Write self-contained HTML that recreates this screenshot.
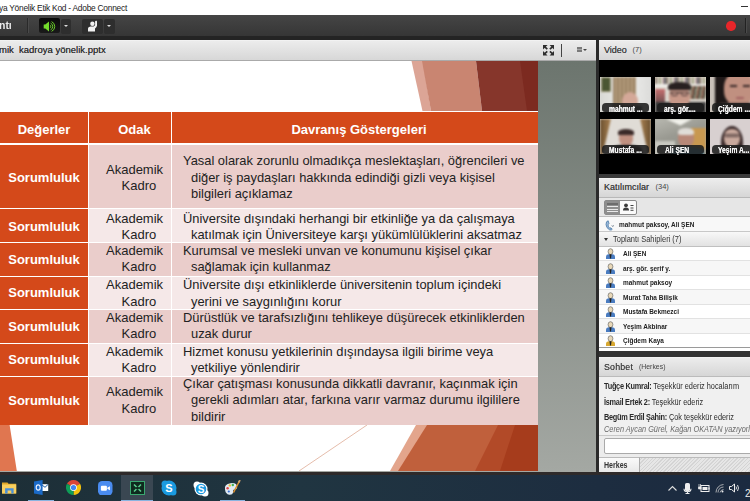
<!DOCTYPE html>
<html><head><meta charset="utf-8">
<style>
*{box-sizing:border-box;margin:0;padding:0}
html,body{width:750px;height:501px;overflow:hidden;background:#2b2b2b;font-family:"Liberation Sans",sans-serif;position:relative}
.a{position:absolute}
.c{display:flex;align-items:center;justify-content:center;text-align:center}
.hd{background:#d4491a;color:#fff;font-weight:bold;font-size:13px}
.ak{font-size:13px;color:#222;line-height:16.4px}
.ak>div{padding-top:0}
.dv{font-size:12.9px;color:#222;line-height:16.4px;padding-left:11px;display:flex;align-items:center}
.dv .ln{padding-left:8px}
.sh{position:relative;top:1.5px}
.podhdr{background:linear-gradient(#f8f8f8 0,#ececec 1px,#d6d6d6)}
.ph{font-size:9px;color:#3c3c3c;text-shadow:0 0 .15px #666}
.cnt{font-size:7.5px;color:#444}
.lbl{background:rgba(28,28,28,.88);border-radius:4px 4px 3px 3px}
.lbt{color:#f4f4f4;font-weight:bold;font-size:8.4px;line-height:9px;white-space:nowrap;transform:scaleX(.8);transform-origin:0 0;text-shadow:0 0 .4px #fff}
.vb{filter:blur(.8px)}
.prow{left:599px;width:151px;height:14.5px;font-size:7.7px;font-weight:bold;color:#222;white-space:nowrap;transform:scaleX(.84);transform-origin:0 0}
.pico{position:absolute;left:6px;top:2.5px;width:10px;height:10px}
.chat{left:604px;font-size:8.3px;color:#2a2a2a;white-space:nowrap;transform:scaleX(.885);transform-origin:0 0}
.chat b{font-weight:bold;letter-spacing:-.3px}
.cx{transform:scaleX(.85);transform-origin:0 0}
</style></head><body>
<!-- title bar -->
<div class="a" style="left:0;top:0;width:750px;height:15px;background:#fff"></div>
<div class="a" style="left:-1px;top:3px;font-size:8.4px;letter-spacing:-0.25px;color:#222;white-space:nowrap;line-height:11px">ya Yönelik Etik Kod - Adobe Connect</div>
<div class="a" style="left:741px;top:6px;width:7px;height:1px;background:#333"></div>
<!-- toolbar -->
<div class="a" style="left:0;top:15px;width:750px;height:21px;background:linear-gradient(#454545,#363636)"></div>
<div class="a" style="left:0;top:36px;width:750px;height:4px;background:#242424"></div>
<div class="a" style="left:-1.2px;top:20.3px;font-size:11px;font-weight:bold;color:#ececec;white-space:nowrap;line-height:11px;transform:scaleX(.95);transform-origin:0 0">ntı</div>
<div class="a" style="left:27px;top:18px;width:1px;height:15px;background:#2a2a2a"></div>
<div class="a" style="left:28px;top:18px;width:1px;height:15px;background:#4a4a4a"></div>
<!-- speaker btn -->
<div class="a" style="left:38.7px;top:18.2px;width:21px;height:14.8px;background:linear-gradient(#0a0a0a,#1a1a1a);border-radius:2px"></div>
<svg class="a" style="left:43px;top:20.5px" width="13" height="11" viewBox="0 0 13 11">
<path d="M.7 3.6h1.6L6 .5v10L2.3 7.4H.7z" fill="#74dc2c"/>
<path d="M6.9 4A1.7 1.7 0 0 1 6.9 7" stroke="#6cd12a" stroke-width="1" fill="none"/>
<path d="M7.6 2.2A3.6 3.6 0 0 1 7.6 8.8" stroke="#6cd12a" stroke-width="1" fill="none"/>
<path d="M8.6 .6A5.4 5.4 0 0 1 8.6 10.4" stroke="#6cd12a" stroke-width="1" fill="none"/>
</svg>
<div class="a" style="left:60.5px;top:18.5px;width:10.5px;height:15px;background:#2e2e2e;border-radius:2px"></div>
<div class="a" style="left:63.5px;top:25px;width:0;height:0;border-left:2.5px solid transparent;border-right:2.5px solid transparent;border-top:2.5px solid #ddd"></div>
<!-- raise hand btn -->
<div class="a" style="left:82px;top:18.5px;width:21px;height:15px;background:#2e2e2e;border-radius:2px"></div>
<svg class="a" style="left:87px;top:20px" width="12" height="12" viewBox="0 0 12 12">
<circle cx="5.4" cy="3.8" r="2.2" fill="#f2f2f2"/>
<path d="M1 11.5V8.6Q1 6.6 3.3 6.4H6.6L8.1 5.2V1.2Q8.6 .4 9.6 .8L10 1.5V5.8Q9.5 7.6 8 8.4V11.5z" fill="#f2f2f2"/>
</svg>
<div class="a" style="left:104px;top:18.5px;width:10.5px;height:15px;background:#2e2e2e;border-radius:2px"></div>
<div class="a" style="left:107px;top:25px;width:0;height:0;border-left:2.5px solid transparent;border-right:2.5px solid transparent;border-top:2.5px solid #ddd"></div>
<!-- red record -->
<div class="a" style="left:726px;top:21px;width:9.5px;height:9.5px;border-radius:50%;background:#e8262a"></div>
<div class="a" style="left:745px;top:18px;width:1px;height:15px;background:#222"></div>
<div class="a" style="left:746px;top:18px;width:1px;height:15px;background:#4a4a4a"></div>

<!-- share pod -->
<div class="a podhdr" style="left:0;top:40px;width:596px;height:21px"></div>
<div class="a" style="left:0;top:60px;width:596px;height:1px;background:#aaa"></div>
<div class="a ph" style="left:-1px;top:43.8px;font-size:9.5px;white-space:nowrap;line-height:11px;color:#2a2a2a">mik&nbsp; kadroya yönelik.pptx</div>
<svg class="a" style="left:543px;top:45px" width="11.2" height="10.5" viewBox="0 0 11.2 10.5">
<g fill="#2e2e2e"><path d="M0 0h4.6L0 4.6z"/><path d="M11.2 0H6.6l4.6 4.6z"/><path d="M0 10.5h4.6L0 5.9z"/><path d="M11.2 10.5H6.6l4.6-4.6z"/></g>
<g stroke="#2e2e2e" stroke-width="1.7"><path d="M1.5 1.5L4.3 4.1M9.7 1.5L6.9 4.1M1.5 9L4.3 6.4M9.7 9L6.9 6.4"/></g>
</svg>
<div class="a" style="left:561px;top:44px;width:1.2px;height:13px;background:#444"></div>
<div class="a" style="left:576.7px;top:47px;width:5.3px;height:5.4px;background:repeating-linear-gradient(#7a7a7a 0 .9px,#a8a8a8 .9px 1.35px)"></div>
<div class="a" style="left:583.3px;top:49.2px;width:0;height:0;border-left:2px solid transparent;border-right:2px solid transparent;border-top:2.2px solid #444"></div>
<div class="a" style="left:0;top:61px;width:596px;height:411px;background:linear-gradient(#6c756e,#a4a8a3)"></div>
<!-- slide -->
<div class="a" style="left:0;top:61px;width:538px;height:410px;background:#fff;overflow:hidden">
<svg class="a" style="left:0;top:0" width="538" height="410" viewBox="0 61 538 410">
<!-- top decorations -->
<polygon points="411.5,61 423,61 431,111 422.5,111" fill="#dca596"/>
<polygon points="422,61 476,61 482,111 431,111" fill="#c98571"/>
<polygon points="476,61 538,61 538,111 482,111" fill="#86362b"/>
<polygon points="520,61 538,61 538,111 527,111" fill="#7c2a20"/>
<!-- bottom decorations -->
<line x1="299" y1="471" x2="367" y2="425" stroke="#e2b4a2" stroke-width="0.9"/>
<polygon points="416,425 428,425 400,471 390,471" fill="#e3a58c"/>
<polygon points="427,425 538,425 538,471 398,471" fill="#c0603c"/>
<polygon points="498,425 538,425 538,471 475,471" fill="#b24a28"/>
<polygon points="515,425 538,425 538,471 500,471" fill="#a63c1c"/>
<polygon points="0,425 9.6,425 16.8,471 0,471" fill="#e07650"/>
</svg>
<div class="a c hd" style="left:0;top:51px;width:88px;height:31px"><span class="sh">Değerler</span></div>
<div class="a c hd" style="left:89px;top:51px;width:82px;height:31px"><span class="sh" style="left:4.5px">Odak</span></div>
<div class="a c hd" style="left:172px;top:51px;width:366px;height:31px"><span class="sh" style="left:4px">Davranış Göstergeleri</span></div>
<div class="a c hd" style="left:0;top:84px;width:88px;height:63px"><span style="position:relative;top:0.7px">Sorumluluk</span></div>
<div class="a ak" style="left:89px;top:84px;width:82px;height:63px;background:#eacdcb;display:flex;align-items:center"><div style="position:relative;top:1.5px;text-align:left;width:82px"><span style="padding-left:17px">Akademik</span><br><span style="padding-left:32.5px">Kadro</span></div></div>
<div class="a dv" style="left:172px;top:84px;width:366px;height:63px;background:#eacdcb"><div style="position:relative;top:1.5px"><span class="l1">Yasal olarak zorunlu olmadıkça meslektaşları, öğrencileri ve</span><br><span class="ln">diğer iş paydaşları hakkında edindiği gizli veya kişisel</span><br><span class="ln">bilgileri açıklamaz</span></div></div>
<div class="a c hd" style="left:0;top:148px;width:88px;height:33px"><span style="position:relative;top:0.7px">Sorumluluk</span></div>
<div class="a ak" style="left:89px;top:148px;width:82px;height:33px;background:#f5e8e8;display:flex;align-items:center"><div style="position:relative;top:1.5px;text-align:left;width:82px"><span style="padding-left:17px">Akademik</span><br><span style="padding-left:32.5px">Kadro</span></div></div>
<div class="a dv" style="left:172px;top:148px;width:366px;height:33px;background:#f5e8e8"><div style="position:relative;top:1.5px"><span class="l1">Üniversite dışındaki herhangi bir etkinliğe ya da çalışmaya</span><br><span class="ln">katılmak için Üniversiteye karşı yükümlülüklerini aksatmaz</span></div></div>
<div class="a c hd" style="left:0;top:182px;width:88px;height:33px"><span style="position:relative;top:-0.4px">Sorumluluk</span></div>
<div class="a ak" style="left:89px;top:182px;width:82px;height:33px;background:#eacdcb;display:flex;align-items:center"><div style="position:relative;top:-0.3px;text-align:left;width:82px"><span style="padding-left:17px">Akademik</span><br><span style="padding-left:32.5px">Kadro</span></div></div>
<div class="a dv" style="left:172px;top:182px;width:366px;height:33px;background:#eacdcb"><div style="position:relative;top:-0.3px"><span class="l1">Kurumsal ve mesleki unvan ve konumunu kişisel çıkar</span><br><span class="ln">sağlamak için kullanmaz</span></div></div>
<div class="a c hd" style="left:0;top:216px;width:88px;height:32px"><span style="position:relative;top:-0.4px">Sorumluluk</span></div>
<div class="a ak" style="left:89px;top:216px;width:82px;height:32px;background:#f5e8e8;display:flex;align-items:center"><div style="position:relative;top:0.6px;text-align:left;width:82px"><span style="padding-left:17px">Akademik</span><br><span style="padding-left:32.5px">Kadro</span></div></div>
<div class="a dv" style="left:172px;top:216px;width:366px;height:32px;background:#f5e8e8"><div style="position:relative;top:0.6px"><span class="l1">Üniversite dışı etkinliklerde üniversitenin toplum içindeki</span><br><span class="ln">yerini ve saygınlığını korur</span></div></div>
<div class="a c hd" style="left:0;top:249px;width:88px;height:33px"><span style="position:relative;top:-0.4px">Sorumluluk</span></div>
<div class="a ak" style="left:89px;top:249px;width:82px;height:33px;background:#eacdcb;display:flex;align-items:center"><div style="position:relative;top:-0.3px;text-align:left;width:82px"><span style="padding-left:17px">Akademik</span><br><span style="padding-left:32.5px">Kadro</span></div></div>
<div class="a dv" style="left:172px;top:249px;width:366px;height:33px;background:#eacdcb"><div style="position:relative;top:-0.3px"><span class="l1">Dürüstlük ve tarafsızlığını tehlikeye düşürecek etkinliklerden</span><br><span class="ln">uzak durur</span></div></div>
<div class="a c hd" style="left:0;top:283px;width:88px;height:32px"><span style="position:relative;top:-0.4px">Sorumluluk</span></div>
<div class="a ak" style="left:89px;top:283px;width:82px;height:32px;background:#f5e8e8;display:flex;align-items:center"><div style="position:relative;top:0px;text-align:left;width:82px"><span style="padding-left:17px">Akademik</span><br><span style="padding-left:32.5px">Kadro</span></div></div>
<div class="a dv" style="left:172px;top:283px;width:366px;height:32px;background:#f5e8e8"><div style="position:relative;top:0px"><span class="l1">Hizmet konusu yetkilerinin dışındaysa ilgili birime veya</span><br><span class="ln">yetkiliye yönlendirir</span></div></div>
<div class="a c hd" style="left:0;top:316px;width:88px;height:48px"><span style="position:relative;top:-0.4px">Sorumluluk</span></div>
<div class="a ak" style="left:89px;top:316px;width:82px;height:48px;background:#eacdcb;display:flex;align-items:center"><div style="position:relative;top:-0.4px;text-align:left;width:82px"><span style="padding-left:17px">Akademik</span><br><span style="padding-left:32.5px">Kadro</span></div></div>
<div class="a dv" style="left:172px;top:316px;width:366px;height:48px;background:#eacdcb"><div style="position:relative;top:-0.4px"><span class="l1">Çıkar çatışması konusunda dikkatli davranır, kaçınmak için</span><br><span class="ln">gerekli adımları atar, farkına varır varmaz durumu ilgililere</span><br><span class="ln">bildirir</span></div></div>
</div>

<!-- gap -->
<div class="a" style="left:596px;top:40px;width:3px;height:432px;background:#2a2a2a"></div>

<!-- video pod -->
<div class="a podhdr" style="left:599px;top:40px;width:151px;height:20px"></div>
<div class="a ph" style="left:604px;top:44.5px;line-height:11px">Video</div>
<div class="a cnt" style="left:632.5px;top:44.8px;line-height:10px">(7)</div>
<div class="a" style="left:599px;top:60px;width:151px;height:114px;background:#000"></div>

<div class="a" style="left:600px;top:77px;width:51px;height:35px;overflow:hidden;background:#dcdcd8">
 <div class="a vb" style="left:-2px;top:-2px;width:55px;height:39px">
 <div class="a" style="left:2px;top:2px;width:14px;height:37px;background:linear-gradient(90deg,#d8d8d4,#e4e4e0)"></div>
 <div class="a" style="left:3px;top:2px;width:10px;height:15px;background:#4a5632;border:1.5px solid #a09878"></div>
 <div class="a" style="left:15px;top:2px;width:24px;height:37px;background:repeating-linear-gradient(90deg,#9a8264 0 2px,#b49c7c 2px 4px)"></div>
 <div class="a" style="left:38px;top:2px;width:17px;height:37px;background:linear-gradient(90deg,#e8e8e6,#dadad8)"></div>
 <div class="a" style="left:24px;top:17px;width:16px;height:18px;border-radius:50% 50% 40% 40%;background:#d4a898"></div>
 <div class="a" style="left:20px;top:31px;width:24px;height:8px;background:#505050"></div>
 </div>
</div>
<div class="a" style="left:655px;top:77px;width:51px;height:35px;overflow:hidden;background:#ddd8d0">
 <div class="a vb" style="left:-2px;top:-2px;width:55px;height:39px">
 <div class="a" style="left:2px;top:2px;width:51px;height:7px;background:repeating-linear-gradient(90deg,#8a7868 0 2px,#d8d4cc 2px 4px,#a0a080 4px 6px,#e8e4dc 6px 8px,#986868 8px 9px,#707880 9px 11px)"></div>
 <div class="a" style="left:2px;top:9px;width:51px;height:2.5px;background:#f0eeea"></div>
 <div class="a" style="left:37px;top:11px;width:16px;height:13px;background:repeating-linear-gradient(100deg,#606858 0 2px,#b8a890 2px 3px,#7a5040 3px 5px)"></div>
 <div class="a" style="left:2px;top:14px;width:10px;height:14px;background:linear-gradient(#c87070,#705050)"></div>
 <div class="a" style="left:2px;top:27px;width:51px;height:12px;background:#3a3a3a"></div>
 <div class="a" style="left:16px;top:9px;width:21px;height:24px;border-radius:45% 45% 40% 40%;background:#c89888"></div>
 <div class="a" style="left:15px;top:7px;width:23px;height:8px;border-radius:50% 50% 15% 15%;background:#282020"></div>
 <div class="a" style="left:17px;top:17px;width:19px;height:1.2px;background:#302828"></div>
 <div class="a" style="left:18px;top:17px;width:7px;height:4px;border:1px solid #403030;border-radius:1.5px"></div>
 <div class="a" style="left:28px;top:17px;width:7px;height:4px;border:1px solid #403030;border-radius:1.5px"></div>
 </div>
</div>
<div class="a" style="left:710px;top:77px;width:40px;height:35px;overflow:hidden;background:#c8c0b8">
 <div class="a vb" style="left:-2px;top:-2px;width:44px;height:39px">
 <div class="a" style="left:7px;top:0;width:14px;height:39px;background:#1e1818"></div>
 <div class="a" style="left:16px;top:-3px;width:30px;height:34px;border-radius:45% 45% 45% 45%;background:#c09080"></div>
 <div class="a" style="left:22px;top:10px;width:7px;height:1.5px;background:#3a2a28"></div>
 <div class="a" style="left:35px;top:10px;width:7px;height:1.5px;background:#3a2a28"></div>
 <div class="a" style="left:28px;top:22px;width:8px;height:2px;background:#a06060;border-radius:1px"></div>
 <div class="a" style="left:12px;top:28px;width:32px;height:11px;background:#4a3a38"></div>
 </div>
</div>
<div class="a" style="left:600px;top:118.5px;width:51px;height:35.5px;overflow:hidden;background:#e0dcd6">
 <div class="a vb" style="left:-2px;top:-2px;width:55px;height:40px">
 <div class="a" style="left:2px;top:2px;width:11px;height:38px;background:linear-gradient(90deg,#6a5030,#a88050);clip-path:polygon(0 0,100% 0,20% 100%,0 100%)"></div>
 <div class="a" style="left:42px;top:2px;width:11px;height:38px;background:linear-gradient(90deg,#a88050,#6a5030);clip-path:polygon(0 0,100% 0,100% 100%,80% 100%)"></div>
 <div class="a" style="left:21px;top:13px;width:14px;height:16px;border-radius:45%;background:#c09080"></div>
 <div class="a" style="left:20px;top:12px;width:16px;height:6px;border-radius:50% 50% 10% 10%;background:#3a2a28"></div>
 <div class="a" style="left:12px;top:28px;width:32px;height:12px;border-radius:40% 40% 0 0;background:#383030"></div>
 </div>
</div>
<div class="a" style="left:655px;top:118.5px;width:51px;height:35.5px;overflow:hidden;background:#a8a8a0">
 <div class="a vb" style="left:-2px;top:-2px;width:55px;height:40px">
 <div class="a" style="left:2px;top:2px;width:51px;height:38px;background:linear-gradient(160deg,#b8b8b0 0,#9a9a92 40%,#8a8a80 100%)"></div>
 <div class="a" style="left:12px;top:2px;width:28px;height:7px;background:#f0f0ea;clip-path:polygon(0 0,100% 0,55% 100%)"></div>
 <div class="a" style="left:2px;top:24px;width:20px;height:16px;background:#c8c8c0"></div>
 <div class="a" style="left:38px;top:11px;width:15px;height:21px;background:#c89850"></div>
 <div class="a" style="left:25px;top:12px;width:16px;height:18px;border-radius:45%;background:#b88878"></div>
 <div class="a" style="left:25px;top:11px;width:16px;height:7px;border-radius:50% 50% 20% 20%;background:#e0ddd8"></div>
 <div class="a" style="left:18px;top:30px;width:32px;height:10px;border-radius:40% 40% 0 0;background:#60a8c8"></div>
 </div>
</div>
<div class="a" style="left:710px;top:118.5px;width:40px;height:35.5px;overflow:hidden;background:#d8d0d0">
 <div class="a vb" style="left:-2px;top:-2px;width:44px;height:40px">
 <div class="a" style="left:13px;top:9px;width:22px;height:32px;border-radius:50% 50% 20% 20%;background:#3a2a2a"></div>
 <div class="a" style="left:16px;top:12px;width:16px;height:18px;border-radius:45%;background:#c8a89c"></div>
 <div class="a" style="left:16px;top:17px;width:16px;height:3.5px;border:1px solid #403030;border-radius:2px"></div>
 </div>
</div>
<div class="a lbl" style="left:602.4px;top:103.2px;width:46.8px;height:9px"></div>
<div class="a lbt" style="left:608.8px;top:104.5px">mahmut ...</div>
<div class="a lbl" style="left:657.4px;top:103.2px;width:46.8px;height:9px"></div>
<div class="a lbt" style="left:664px;top:104.5px">arş. gör....</div>
<div class="a lbl" style="left:712px;top:103.2px;width:40px;height:9px"></div>
<div class="a lbt" style="left:718.4px;top:104.5px">Çiğdem ...</div>
<div class="a lbl" style="left:602.4px;top:145px;width:46.8px;height:9px"></div>
<div class="a lbt" style="left:609px;top:146.3px">Mustafa ...</div>
<div class="a lbl" style="left:657.4px;top:145px;width:46.8px;height:9px"></div>
<div class="a lbt" style="left:665px;top:146.3px">Ali ŞEN</div>
<div class="a lbl" style="left:712px;top:145px;width:40px;height:9px"></div>
<div class="a lbt" style="left:718.4px;top:146.3px">Yeşim A...</div>


<!-- participants pod -->
<div class="a" style="left:599px;top:174px;width:151px;height:3.5px;background:#3a3a3a"></div>
<div class="a podhdr" style="left:599px;top:177.5px;width:151px;height:19.5px"></div>
<div class="a ph" style="left:604px;top:182px;line-height:11px">Katılımcılar</div>
<div class="a cnt" style="left:655.5px;top:182.3px;line-height:10px">(34)</div>
<div class="a" style="left:599px;top:197px;width:151px;height:20px;background:#e6e6e6;border-top:1px solid #b8b8b8;border-bottom:1px solid #bdbdbd"></div>
<div class="a" style="left:604px;top:199.5px;width:32.5px;height:15px;border:1px solid #8a8a8a;border-radius:2px;background:#fafafa"></div>
<svg class="a" style="left:622.5px;top:202.5px" width="11" height="10" viewBox="0 0 11 10"><circle cx="3" cy="2.3" r="1.9" fill="#3a3a3a"/><path d="M0 7.2Q0 4.6 3 4.6T6 7.2V7.5H0z" fill="#3a3a3a"/><path d="M7.5 2.5h3M7.5 5h3M7.5 7.3h3" stroke="#444" stroke-width="1"/></svg>
<div class="a" style="left:605px;top:200.5px;width:15px;height:13px;background:#8e8e8e"></div>
<div class="a" style="left:606.5px;top:202.5px;width:11px;height:2px;background:#6c6c6c"></div>
<div class="a" style="left:606.5px;top:206.3px;width:11px;height:.8px;background:#e8e8e8"></div>
<div class="a" style="left:606.5px;top:208.6px;width:11px;height:.8px;background:#e8e8e8"></div>
<div class="a" style="left:606.5px;top:210.9px;width:11px;height:.8px;background:#e8e8e8"></div>
<div class="a" style="left:599px;top:217px;width:151px;height:14.5px;background:#f8f8f8;border-bottom:1px solid #c8c8c8"></div>
<svg class="a" style="left:604.5px;top:220px" width="10" height="11" viewBox="0 0 10 11"><path d="M3.2 .8Q1 1 1 4.5 1.2 8 4.5 9.8 6.5 10.6 7.2 9.3L6 7.8 4.8 8.3Q3.2 7 3 4.8L4 3.8z" fill="#9ab8d8" stroke="#4a7aa8" stroke-width=".8"/><path d="M6.8 5.5l1.5 1.5M8 5.2l.8.8" stroke="#5a6a7a" stroke-width=".8"/></svg><div class="a prow" style="top:219.5px;left:619px;width:auto;line-height:10px">mahmut paksoy, Ali ŞEN</div>
<div class="a" style="left:599px;top:231.5px;width:151px;height:15px;background:linear-gradient(#f8f8f8,#e2e2e2);border-bottom:1px solid #c0c0c0"></div>
<div class="a" style="left:603.5px;top:237.5px;width:0;height:0;border-left:2.5px solid transparent;border-right:2.5px solid transparent;border-top:3.5px solid #333"></div>
<div class="a cx" style="left:613px;top:234px;font-size:8.3px;color:#333;white-space:nowrap;line-height:10px;transform:scaleX(.9)">Toplantı Sahipleri (7)</div>
<div class="a" style="left:599px;top:246.6px;width:151px;height:14.5px;background:#ffffff;border-bottom:1px solid #e2e2e2"></div>
<svg class="a" style="left:605px;top:248.4px" width="11" height="11" viewBox="0 0 11 11">
<path d="M1 11V8.5Q1 6.5 3.5 6.3h4Q10 6.5 10 8.5V11z" fill="#4a7cc0"/>
<ellipse cx="5.5" cy="3.6" rx="2.4" ry="2.9" fill="#e8d8b8" stroke="#555" stroke-width=".6"/>
<path d="M4.5 6.3h2L6 10.5h-1z" fill="#222"/>
</svg>
<div class="a prow" style="top:249.1px;left:623px;width:auto;line-height:10px">Ali ŞEN</div>
<div class="a" style="left:599px;top:261.1px;width:151px;height:14.5px;background:#f7f7f7;border-bottom:1px solid #e2e2e2"></div>
<svg class="a" style="left:605px;top:262.90000000000003px" width="11" height="11" viewBox="0 0 11 11">
<path d="M1 11V8.5Q1 6.5 3.5 6.3h4Q10 6.5 10 8.5V11z" fill="#4a7cc0"/>
<ellipse cx="5.5" cy="3.6" rx="2.4" ry="2.9" fill="#e8d8b8" stroke="#555" stroke-width=".6"/>
<path d="M4.5 6.3h2L6 10.5h-1z" fill="#222"/>
</svg>
<div class="a prow" style="top:263.6px;left:623px;width:auto;line-height:10px">arş. gör. şerif y.</div>
<div class="a" style="left:599px;top:275.6px;width:151px;height:14.5px;background:#ffffff;border-bottom:1px solid #e2e2e2"></div>
<svg class="a" style="left:605px;top:277.40000000000003px" width="11" height="11" viewBox="0 0 11 11">
<path d="M1 11V8.5Q1 6.5 3.5 6.3h4Q10 6.5 10 8.5V11z" fill="#4a7cc0"/>
<ellipse cx="5.5" cy="3.6" rx="2.4" ry="2.9" fill="#e8d8b8" stroke="#555" stroke-width=".6"/>
<path d="M4.5 6.3h2L6 10.5h-1z" fill="#222"/>
</svg>
<div class="a prow" style="top:278.1px;left:623px;width:auto;line-height:10px">mahmut paksoy</div>
<div class="a" style="left:599px;top:290.1px;width:151px;height:14.5px;background:#f7f7f7;border-bottom:1px solid #e2e2e2"></div>
<svg class="a" style="left:605px;top:291.90000000000003px" width="11" height="11" viewBox="0 0 11 11">
<path d="M1 11V8.5Q1 6.5 3.5 6.3h4Q10 6.5 10 8.5V11z" fill="#4a7cc0"/>
<ellipse cx="5.5" cy="3.6" rx="2.4" ry="2.9" fill="#e8d8b8" stroke="#555" stroke-width=".6"/>
<path d="M4.5 6.3h2L6 10.5h-1z" fill="#222"/>
</svg>
<div class="a prow" style="top:292.6px;left:623px;width:auto;line-height:10px">Murat Taha Bilişik</div>
<div class="a" style="left:599px;top:304.6px;width:151px;height:14.5px;background:#ffffff;border-bottom:1px solid #e2e2e2"></div>
<svg class="a" style="left:605px;top:306.40000000000003px" width="11" height="11" viewBox="0 0 11 11">
<path d="M1 11V8.5Q1 6.5 3.5 6.3h4Q10 6.5 10 8.5V11z" fill="#4a7cc0"/>
<ellipse cx="5.5" cy="3.6" rx="2.4" ry="2.9" fill="#e8d8b8" stroke="#555" stroke-width=".6"/>
<path d="M4.5 6.3h2L6 10.5h-1z" fill="#222"/>
</svg>
<div class="a prow" style="top:307.1px;left:623px;width:auto;line-height:10px">Mustafa Bekmezci</div>
<div class="a" style="left:599px;top:319.1px;width:151px;height:14.5px;background:#f7f7f7;border-bottom:1px solid #e2e2e2"></div>
<svg class="a" style="left:605px;top:320.90000000000003px" width="11" height="11" viewBox="0 0 11 11">
<path d="M1 11V8.5Q1 6.5 3.5 6.3h4Q10 6.5 10 8.5V11z" fill="#4a7cc0"/>
<ellipse cx="5.5" cy="3.6" rx="2.4" ry="2.9" fill="#e8d8b8" stroke="#555" stroke-width=".6"/>
<path d="M4.5 6.3h2L6 10.5h-1z" fill="#222"/>
</svg>
<div class="a prow" style="top:321.6px;left:623px;width:auto;line-height:10px">Yeşim Akbinar</div>
<div class="a" style="left:599px;top:333.6px;width:151px;height:14.5px;background:#ffffff;border-bottom:1px solid #e2e2e2"></div>
<svg class="a" style="left:605px;top:335.40000000000003px" width="11" height="11" viewBox="0 0 11 11">
<path d="M1 11V8.5Q1 6.5 3.5 6.3h4Q10 6.5 10 8.5V11z" fill="#d8a830"/>
<ellipse cx="5.5" cy="3.6" rx="2.4" ry="2.9" fill="#e8d8b8" stroke="#555" stroke-width=".6"/>
<path d="M4.5 6.3h2L6 10.5h-1z" fill="#222"/>
</svg>
<div class="a prow" style="top:336.1px;left:623px;width:auto;line-height:10px">Çiğdem Kaya</div>
<div class="a" style="left:599px;top:348.1px;width:151px;height:2.7px;background:#fff"></div>
<div class="a" style="left:599px;top:346.8px;width:151px;height:1.2px;background:#9a9a9a"></div>


<!-- chat pod -->
<div class="a" style="left:599px;top:350.8px;width:151px;height:6px;background:#333"></div>
<div class="a podhdr" style="left:599px;top:357px;width:151px;height:20px;border-bottom:1px solid #bbb"></div>
<div class="a ph" style="left:603.5px;top:360.8px;line-height:11px;font-size:9.4px;transform:scaleX(.94);transform-origin:0 0;letter-spacing:.2px">Sohbet</div>
<div class="a cnt" style="left:638.5px;top:361.5px;line-height:10px;transform:scaleX(.92);transform-origin:0 0">(Herkes)</div>
<div class="a" style="left:599px;top:377px;width:151px;height:58px;background:#f0f0f0"></div>
<div class="a chat" style="top:381.3px;line-height:10px"><b>Tuğçe Kumral:</b> Teşekkür ederiz hocalarım</div>
<div class="a chat" style="top:396.8px;line-height:10px"><b>İsmail Ertek 2:</b> Teşekkür ederiz</div>
<div class="a chat" style="top:412px;line-height:10px"><b>Begüm Erdil Şahin:</b> Çok teşekkür ederiz</div>
<div class="a chat" style="top:424px;line-height:10px;font-style:italic;color:#686868">Ceren Aycan Gürel, Kağan OKATAN yazıyorlar</div>
<div class="a" style="left:599px;top:435px;width:151px;height:1px;background:#c8c8c8"></div>
<div class="a" style="left:599px;top:436px;width:151px;height:20.5px;background:#ececec"></div>
<div class="a" style="left:604px;top:438px;width:150px;height:16px;background:#fff;border:1px solid #aaa;border-radius:2px"></div>
<div class="a" style="left:599px;top:456.5px;width:151px;height:15.5px;background:repeating-linear-gradient(135deg,#d4d4d4 0 1px,#e6e6e6 1px 2.5px);border-top:1px solid #bbb"></div>
<div class="a" style="left:599px;top:456.5px;width:40.5px;height:15.5px;background:linear-gradient(#fafafa,#e8e8e8);border-right:1px solid #aaa;border-top:1px solid #bbb"></div>
<div class="a cx" style="left:603.7px;top:459.5px;font-size:8.3px;font-weight:bold;color:#333;line-height:10px">Herkes</div>


<!-- taskbar -->
<div class="a" style="left:0;top:472px;width:750px;height:2.5px;background:#2e2a2a"></div>
<div class="a" style="left:0;top:474.5px;width:750px;height:26.5px;background:linear-gradient(90deg,#1d2f37,#203541 40%,#1d2d40 80%,#1b2a40)"></div>

<div class="a" style="left:121px;top:474.5px;width:32px;height:26.5px;background:#3a4752"></div>
<svg class="a" style="left:1.8px;top:482px" width="15" height="12" viewBox="0 0 15 12"><path d="M0 .5h5.5l1 1.2H14.2V11.5H0z" fill="#e0a828"/><path d="M0 2.5h14.2v9H0z" fill="#f8d060"/><path d="M3.1 11.5V6.3h8.5v5.2H9.3V8.5H5.6v3z" fill="#4a90d8"/></svg>
<div class="a" style="left:28px;top:499.5px;width:26px;height:1.5px;background:#8ab4e0"></div>
<svg class="a" style="left:34px;top:480px" width="15" height="15" viewBox="0 0 15 15"><rect x="7" y="4.2" width="7.2" height="6.8" fill="#fff"/><path d="M8 5l3 2.3 3-2.8" stroke="#1a5aa0" stroke-width="1" fill="none"/><path d="M0 1.5L8.6 0V15L0 13.5z" fill="#1a6ac8"/><ellipse cx="4.2" cy="7.5" rx="2" ry="2.7" fill="none" stroke="#e8f0ff" stroke-width="1.2"/></svg>
<svg class="a" style="left:65.5px;top:480.2px" width="15" height="15" viewBox="0 0 16 16">
<path d="M8 8L1.07 4A8 8 0 0 1 14.93 4z" fill="#db4437"/>
<path d="M8 8L14.93 4A8 8 0 0 1 8 16z" fill="#f4c20d"/>
<path d="M8 8L8 16A8 8 0 0 1 1.07 4z" fill="#0f9d58"/>
<circle cx="8" cy="8" r="3.6" fill="#fff"/><circle cx="8" cy="8" r="2.8" fill="#4285f4"/></svg>
<svg class="a" style="left:98px;top:480.8px" width="14.5" height="14.5" viewBox="0 0 14 14"><rect width="14" height="14" rx="4" fill="#4a8cf0"/><rect x="2.8" y="4.5" width="5.8" height="5" rx="1" fill="#fff"/><path d="M9 6.5l2.5-1.5v4L9 7.5z" fill="#fff"/></svg>
<svg class="a" style="left:129.5px;top:480.5px" width="15" height="14" viewBox="0 0 15 14"><rect x=".5" y=".5" width="14" height="13" fill="#0e2a1e" stroke="#3aa870" stroke-width="1"/><path d="M4 3.5l7 7M11 3.5l-7 7" stroke="#5ad090" stroke-width="1.5"/><circle cx="7.5" cy="7" r="1.6" fill="#0e2a1e"/></svg>
<div class="a" style="left:121px;top:499.5px;width:32px;height:1.5px;background:#8ab4e0"></div>
<svg class="a" style="left:161px;top:480.3px" width="16" height="16" viewBox="0 0 16 16"><circle cx="8" cy="8" r="7.5" fill="#1a9ae0"/><circle cx="4" cy="4" r="3.5" fill="#1a9ae0"/><circle cx="12" cy="12" r="3.5" fill="#1a9ae0"/><text x="8" y="12" text-anchor="middle" font-family="Liberation Sans" font-weight="bold" font-size="11" fill="#fff">S</text></svg>
<svg class="a" style="left:192.5px;top:480.5px" width="16" height="16" viewBox="0 0 16 16"><circle cx="8" cy="8" r="6.5" fill="#fff"/><circle cx="4" cy="4" r="3.5" fill="#fff"/><circle cx="12" cy="12" r="3.5" fill="#fff"/><circle cx="8" cy="8" r="5.3" fill="#1a9ae0"/><text x="8" y="11.8" text-anchor="middle" font-family="Liberation Sans" font-weight="bold" font-size="10" fill="#fff">S</text></svg>
<svg class="a" style="left:224px;top:480px" width="17" height="16" viewBox="0 0 17 16"><path d="M1 9.5Q0 4 6.5 3.2 13 2.5 13.2 7.2 13 9.5 10.5 9.5 8.5 9.8 9.3 12.3 8.5 15.2 5.2 14.8 1.5 14 1 9.5z" fill="#dfe8f2"/><circle cx="3.6" cy="8.2" r="1.2" fill="#e04848"/><circle cx="5.8" cy="5.4" r="1.2" fill="#f0c030"/><circle cx="8.8" cy="5" r="1.2" fill="#40b050"/><circle cx="4.8" cy="11.5" r="1.1" fill="#3a70d0"/><path d="M9.5 12.5L15.2 1.5" stroke="#e0902a" stroke-width="1.5"/><path d="M14.6 2.5L16 0" stroke="#c8a070" stroke-width="1.8"/></svg>
<div class="a" style="left:220px;top:499.5px;width:25px;height:1.5px;background:#8ab4e0"></div>
<svg class="a" style="left:667.5px;top:485px" width="9" height="6" viewBox="0 0 9 6"><path d="M.5 5.5L4.5 1.5 8.5 5.5" stroke="#ddd" stroke-width="1.1" fill="none"/></svg>
<svg class="a" style="left:683px;top:482.5px" width="9" height="11" viewBox="0 0 9 11"><rect x="2" y="0" width="5" height="8" rx="1.6" fill="#eee"/><path d="M1 5.8q0 3 3.5 3t3.5-3" stroke="#eee" stroke-width="1.1" fill="none"/><path d="M4.5 8.5V10.5M2.5 10.5h4" stroke="#eee" stroke-width="1"/></svg>
<svg class="a" style="left:697.5px;top:483.5px" width="12" height="8" viewBox="0 0 12 8"><rect x="3" y="1.5" width="8" height="6" fill="none" stroke="#eee" stroke-width="1"/><rect x="4.5" y="3" width="5" height="3" fill="#eee"/><path d="M11 3.5v2" stroke="#eee" stroke-width="1.2"/><path d="M1 0v3M2.5 0v3M.5 3h2.5v2H.5z" stroke="#eee" stroke-width=".7" fill="#eee"/></svg>
<svg class="a" style="left:715px;top:483px" width="9" height="10" viewBox="0 0 9 10"><path d="M1 9.5A8 8 0 0 1 8.5 1.5M3 9.5A6 6 0 0 1 8.5 4M5 9.5A4 4 0 0 1 8.5 6.5" stroke="#ccc" stroke-width=".8" fill="none"/><circle cx="7.5" cy="8.5" r="1" fill="#eee"/></svg>
<svg class="a" style="left:729px;top:483px" width="11" height="10" viewBox="0 0 11 10"><path d="M.5 3.5h2L5.5 1v8L2.5 6.5h-2z" fill="none" stroke="#eee" stroke-width="1"/><path d="M7 3.5q1 1.5 0 3M8.5 2q2 3 0 6" stroke="#eee" stroke-width=".9" fill="none"/></svg>
<div class="a" style="left:745px;top:489px;font-size:10px;color:#eee;line-height:10px">2</div>

</body></html>
